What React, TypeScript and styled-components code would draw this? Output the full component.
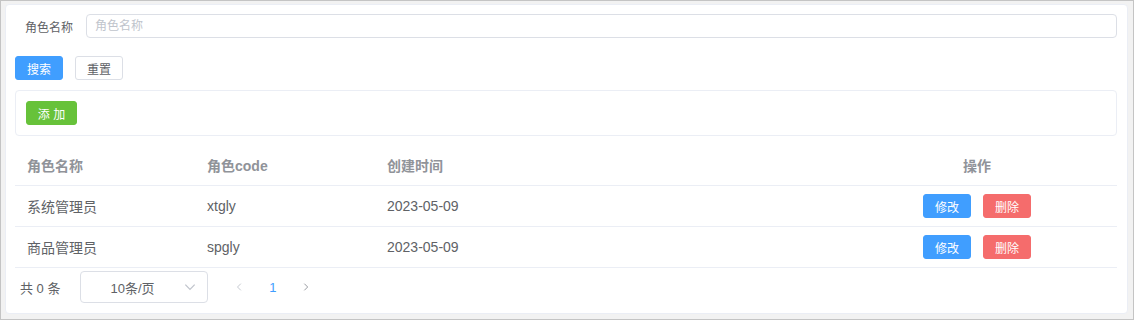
import { FC, Fragment } from "react";
import styled, { createGlobalStyle } from "styled-components";

const GlobalStyle = createGlobalStyle`
  html, body {
    margin: 0;
    padding: 0;
    background: #f2f2f2;
  }
  body {
    font-family: "Liberation Sans", Arial, "Noto Sans CJK SC", sans-serif;
  }
  * {
    box-sizing: border-box;
  }
`;

const Frame = styled.div`
  width: 1134px;
  height: 320px;
  border: 1px solid #c4c4c4;
  background: #f2f2f2;
  padding: 3px 5px 5px 4px;
`;

const Card = styled.div`
  height: 100%;
  background: #fff;
  border: 1px solid #ebeef5;
  border-radius: 4px;
  padding: 9px 10px 0 9px;
  display: flex;
  flex-direction: column;
`;

const SearchRow = styled.div`
  display: flex;
  align-items: center;
  height: 24px;
`;

const Label = styled.label`
  font-size: 12px;
  color: #606266;
  width: 71px;
  padding-right: 13px;
  text-align: right;
`;

const Input = styled.input`
  flex: 1;
  height: 24px;
  border: 1px solid #dcdfe6;
  border-radius: 4px;
  padding: 0 8px;
  font-size: 12px;
  font-family: inherit;
  color: #606266;
  outline: none;

  &::placeholder {
    color: #c0c4cc;
  }
`;

const ButtonRow = styled.div`
  display: flex;
  gap: 12px;
  margin-top: 18px;
`;

type Variant = "primary" | "plain" | "success" | "danger";

const colors: Record<Variant, { bg: string; fg: string; border: string }> = {
  primary: { bg: "#409eff", fg: "#fff", border: "#409eff" },
  plain: { bg: "#fff", fg: "#606266", border: "#dcdfe6" },
  success: { bg: "#67c23a", fg: "#fff", border: "#67c23a" },
  danger: { bg: "#f56c6c", fg: "#fff", border: "#f56c6c" },
};

const Button = styled.button<{ $variant: Variant; $w?: number }>`
  width: ${(p) => p.$w ?? 48}px;
  height: 24px;
  padding: 0;
  border-radius: 3px;
  font-size: 12px;
  font-family: inherit;
  cursor: pointer;
  background: ${(p) => colors[p.$variant].bg};
  color: ${(p) => colors[p.$variant].fg};
  border: 1px solid ${(p) => colors[p.$variant].border};
`;

const Toolbar = styled.div`
  margin-top: 10px;
  height: 46px;
  border: 1px solid #ebeef5;
  border-radius: 4px;
  padding: 10px;
  display: flex;
  align-items: center;
`;

const Table = styled.div`
  margin-top: 9px;
  display: grid;
  grid-template-columns: 180px 180px 1fr 280px;
`;

const HeadCell = styled.div<{ $center?: boolean }>`
  height: 41px;
  display: flex;
  align-items: center;
  justify-content: ${(p) => (p.$center ? "center" : "flex-start")};
  padding: 0 12px;
  font-size: 14px;
  font-weight: bold;
  color: #909399;
  border-bottom: 1px solid #ebeef5;
`;

const Cell = styled.div<{ $center?: boolean }>`
  height: 41px;
  display: flex;
  align-items: center;
  justify-content: ${(p) => (p.$center ? "center" : "flex-start")};
  gap: 12px;
  padding: 0 12px;
  font-size: 14px;
  color: #606266;
  border-bottom: 1px solid #ebeef5;
`;

const Pager = styled.div`
  display: flex;
  align-items: center;
  height: 38px;
  padding-left: 5px;
  font-size: 13px;
  color: #606266;
`;

const Total = styled.span`
  margin-right: 20px;
`;

const Select = styled.div`
  width: 128px;
  height: 32px;
  border: 1px solid #dcdfe6;
  border-radius: 4px;
  display: flex;
  align-items: center;
  padding-left: 29px;
  padding-right: 10px;
  justify-content: space-between;
  font-size: 13px;
  color: #606266;
`;

const PageBtn = styled.span<{ $active?: boolean }>`
  width: 33px;
  display: flex;
  justify-content: center;
  align-items: center;
  font-size: 13px;
  color: ${(p) => (p.$active ? "#409eff" : "#c0c4cc")};
`;

const Pages = styled.div`
  display: flex;
  margin-left: 15px;
`;

const Chevron: FC<{ dir: "left" | "right" | "down"; color: string; size?: number }> = ({ dir, color, size = 10 }) => {
  const d =
    dir === "left" ? "M7 2 L3 6 L7 10" : dir === "right" ? "M4 2 L8 6 L4 10" : "M2 4 L6 8 L10 4";
  return (
    <svg width={size} height={size} viewBox="0 0 12 12">
      <path d={d} fill="none" stroke={color} strokeWidth="1.1" />
    </svg>
  );
};

const rows = [
  { name: "系统管理员", code: "xtgly", date: "2023-05-09" },
  { name: "商品管理员", code: "spgly", date: "2023-05-09" },
];

const App: FC = () => (
  <>
    <GlobalStyle />
    <Frame>
      <Card>
        <SearchRow>
          <Label>角色名称</Label>
          <Input placeholder="角色名称" />
        </SearchRow>
        <ButtonRow>
          <Button $variant="primary">搜索</Button>
          <Button $variant="plain">重置</Button>
        </ButtonRow>
        <Toolbar>
          <Button $variant="success" $w={51}>添 加</Button>
        </Toolbar>
        <Table>
          <HeadCell>角色名称</HeadCell>
          <HeadCell>角色code</HeadCell>
          <HeadCell>创建时间</HeadCell>
          <HeadCell $center>操作</HeadCell>
          {rows.map((r) => (
            <Fragment key={r.code}>
              <Cell>{r.name}</Cell>
              <Cell>{r.code}</Cell>
              <Cell>{r.date}</Cell>
              <Cell $center>
                <Button $variant="primary">修改</Button>
                <Button $variant="danger">删除</Button>
              </Cell>
            </Fragment>
          ))}
        </Table>
        <Pager>
          <Total>共 0 条</Total>
          <Select>
            <span>10条/页</span>
            <Chevron dir="down" color="#c0c4cc" size={14} />
          </Select>
          <Pages>
            <PageBtn>
              <Chevron dir="left" color="#c0c4cc" />
            </PageBtn>
            <PageBtn $active>1</PageBtn>
            <PageBtn>
              <Chevron dir="right" color="#909399" />
            </PageBtn>
          </Pages>
        </Pager>
      </Card>
    </Frame>
  </>
);

export default App;
